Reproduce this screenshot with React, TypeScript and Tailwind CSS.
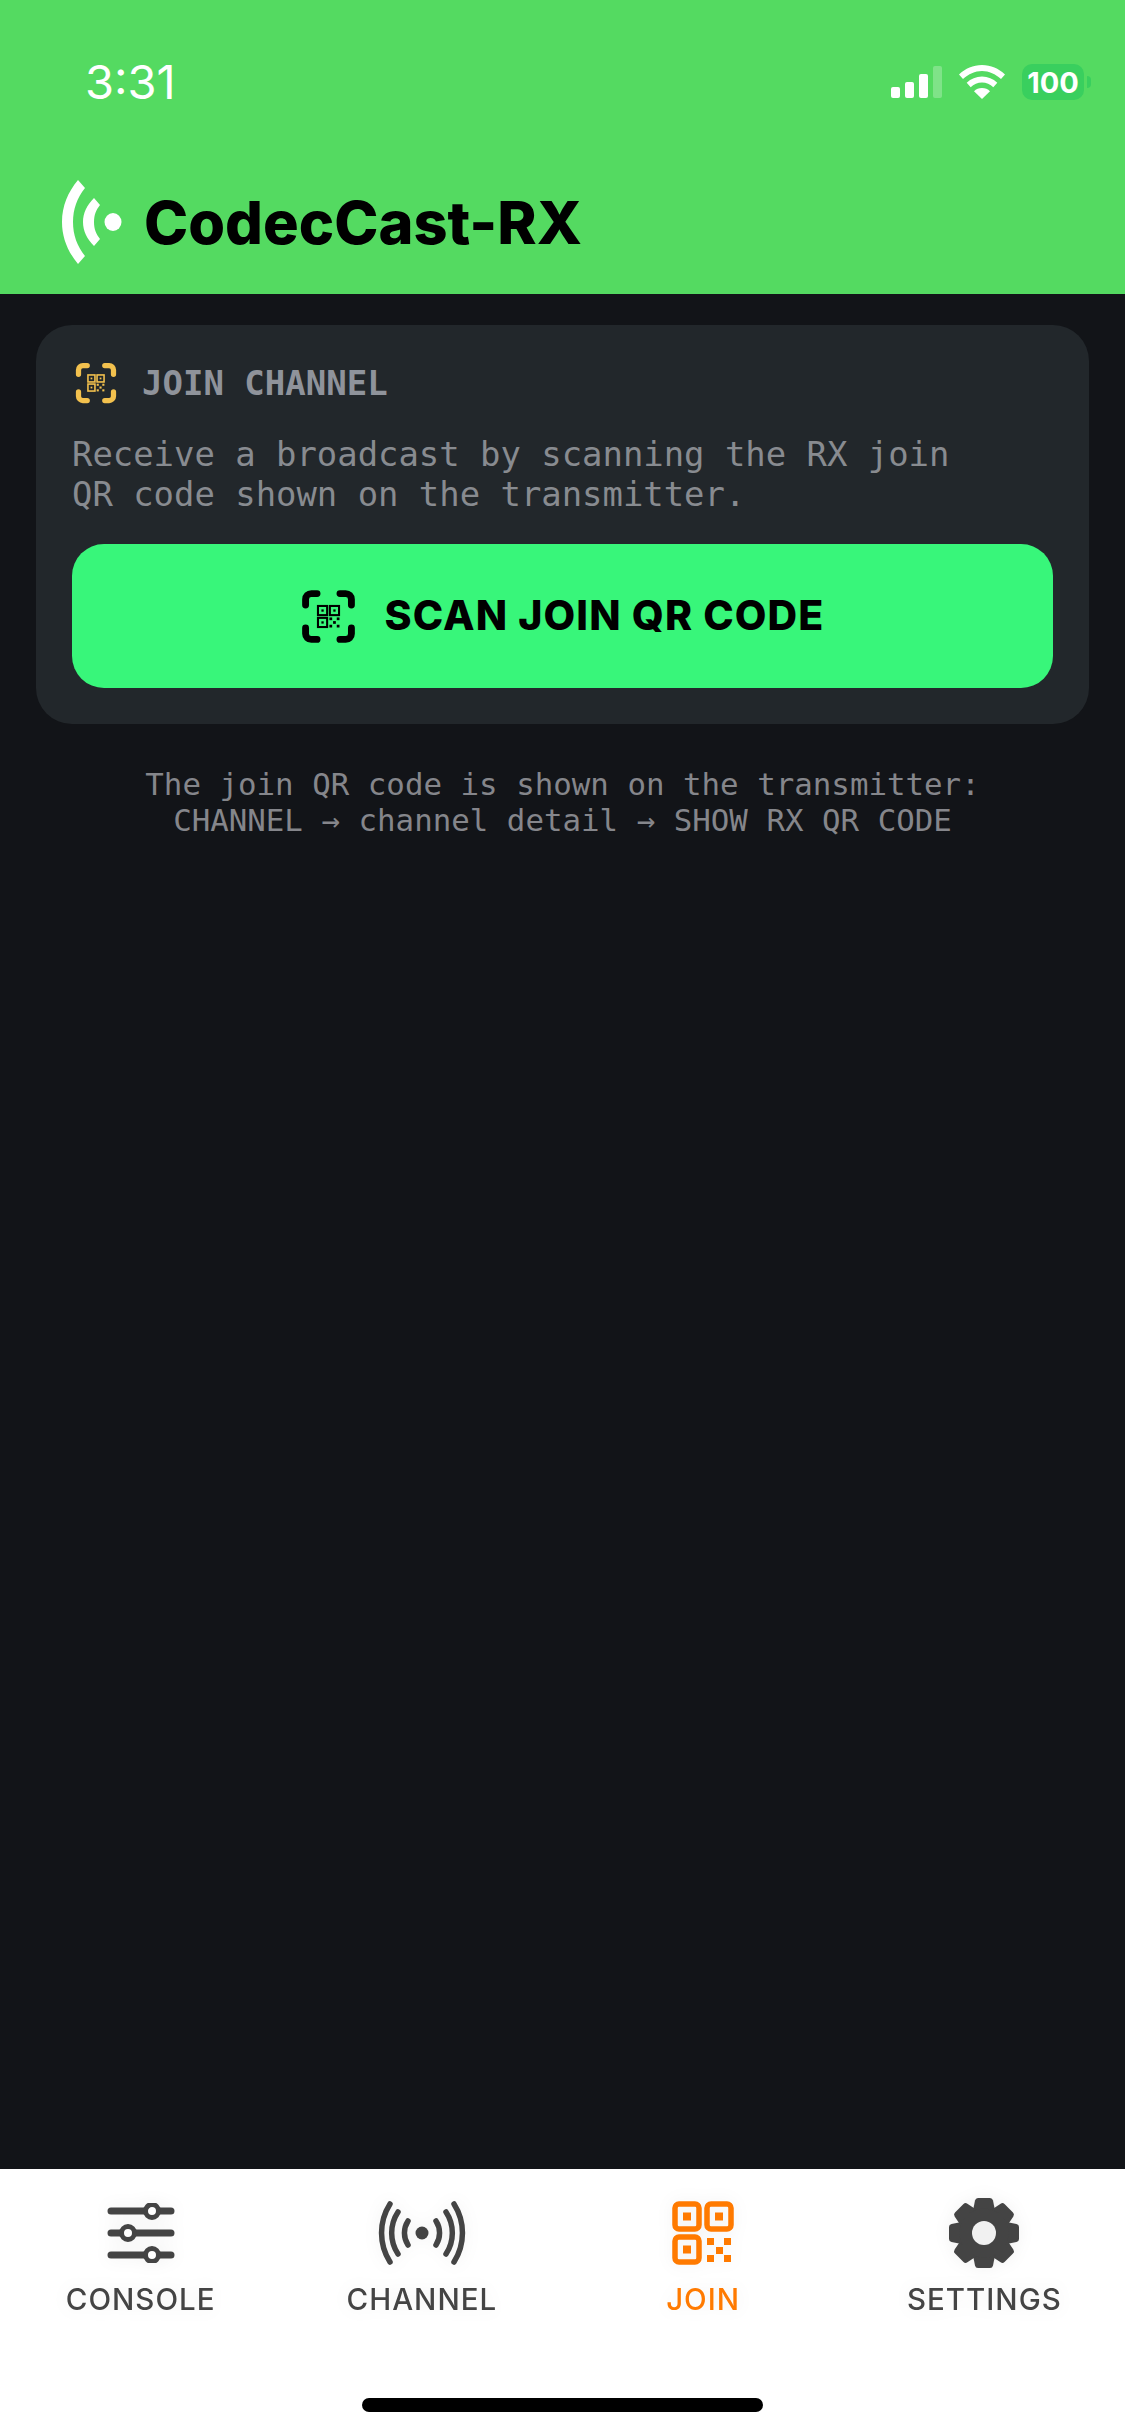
import type { ReactNode } from 'react';

const mono = 'font-["DejaVu_Sans_Mono","Liberation_Mono",monospace]';

function MiniQr() {
  return (
    <g>
      <rect x="7.4" y="7.4" width="4" height="4" fill="none" stroke="currentColor" strokeWidth="0.9" />
      <rect x="8.900" y="8.900" width="1" height="1" fill="currentColor" />
      <rect x="12.6" y="7.4" width="4" height="4" fill="none" stroke="currentColor" strokeWidth="0.9" />
      <rect x="14.100" y="8.900" width="1" height="1" fill="currentColor" />
      <rect x="7.4" y="12.6" width="4" height="4" fill="none" stroke="currentColor" strokeWidth="0.9" />
      <rect x="8.900" y="14.100" width="1" height="1" fill="currentColor" />
      <rect x="12.4" y="12.4" width="1.2" height="1.2" fill="currentColor" />
      <rect x="15.6" y="12.4" width="1.2" height="1.2" fill="currentColor" />
      <rect x="14" y="14" width="1.2" height="1.2" fill="currentColor" />
      <rect x="12.4" y="15.6" width="1.2" height="1.2" fill="currentColor" />
      <rect x="15.6" y="15.6" width="1.2" height="1.2" fill="currentColor" />
    </g>
  );
}

function ScanQrIcon({ className }: { className: string }) {
  return (
    <svg className={className} viewBox="0 0 24 24" fill="none">
      <path
        d="M2 7V4.500A2.500 2.500 0 0 1 4.500 2H7M17 2h2.500A2.500 2.500 0 0 1 22 4.500V7M22 17v2.500a2.500 2.500 0 0 1-2.500 2.500H17M7 22H4.500A2.500 2.500 0 0 1 2 19.500V17"
        stroke="currentColor"
        strokeWidth="3"
        strokeLinecap="round"
      />
      <MiniQr />
    </svg>
  );
}

function SlidersIcon() {
  return (
    <svg className="w-[68px] h-[60px]" viewBox="0 0 68 60" fill="none" stroke="currentColor" strokeWidth="7" strokeLinecap="round">
      <path d="M4 8h60M4 30h60M4 52h60" />
      <circle cx="45" cy="8" r="6.500" fill="#fff" strokeWidth="5" />
      <circle cx="21" cy="30" r="6.500" fill="#fff" strokeWidth="5" />
      <circle cx="45" cy="52" r="6.500" fill="#fff" strokeWidth="5" />
    </svg>
  );
}

function BroadcastIcon() {
  return (
    <svg className="w-[88px] h-[64px]" viewBox="0 0 88 64" fill="none" stroke="currentColor" strokeWidth="5.500" strokeLinecap="round">
      <circle cx="44" cy="32" r="6.500" fill="currentColor" stroke="none" />
      <path d="M30 20a22 22 0 0 0 0 24M58 20a22 22 0 0 1 0 24" />
      <path d="M20 11a38 38 0 0 0 0 42M68 11a38 38 0 0 1 0 42" />
      <path d="M12 3a54 54 0 0 0 0 58M76 3a54 54 0 0 1 0 58" />
    </svg>
  );
}

function QrIcon() {
  return (
    <svg className="w-[62px] h-[64px]" viewBox="0 0 62 64" fill="none">
      <rect x="3" y="3" width="24" height="25" rx="4" stroke="currentColor" strokeWidth="5.500" />
      <rect x="35" y="3" width="24" height="25" rx="4" stroke="currentColor" strokeWidth="5.500" />
      <rect x="3" y="36" width="24" height="25" rx="4" stroke="currentColor" strokeWidth="5.500" />
      <g fill="currentColor">
        <rect x="11" y="11.500" width="8" height="8" />
        <rect x="43" y="11.500" width="8" height="8" />
        <rect x="11" y="44.500" width="8" height="8" />
        <rect x="35" y="37" width="7" height="7" />
        <rect x="52" y="37" width="7" height="7" />
        <rect x="44" y="46" width="7" height="7" />
        <rect x="35" y="54" width="7" height="7" />
        <rect x="52" y="54" width="7" height="7" />
      </g>
    </svg>
  );
}

function GearIcon() {
  return (
    <svg className="w-[72px] h-[74px]" viewBox="0 0 72 72">
      <g fill="currentColor">
        {[0, 45, 90, 135, 180, 225, 270, 315].map((deg) => (
          <path key={deg} d="M30 1q-2.500 0-3 2.500L24.500 16h23L45 3.500q-.5-2.500-3-2.500z" transform={`rotate(${deg} 36 36)`} />
        ))}
        <circle cx="36" cy="36" r="24.500" />
      </g>
      <circle cx="36" cy="36" r="12" fill="#f1f1f1" />
    </svg>
  );
}

function NavTab({ icon, label, active }: { icon: ReactNode; label: string; active?: boolean }) {
  return (
    <div className={`flex flex-col items-center ${active ? 'text-[#ff7a00]' : 'text-[#444444]'}`}>
      <div className="h-[80px] flex items-center justify-center drop-shadow-[0_0_8px_rgba(0,0,0,0.06)]">{icon}</div>
      <span className="mt-[9px] text-[29.5px] leading-[34px] font-medium tracking-[1px] font-['Inter',sans-serif] drop-shadow-[0_0_8px_rgba(0,0,0,0.06)]">{label}</span>
    </div>
  );
}

export default function App() {
  return (
    <div className="w-[1125px] h-[2436px] flex flex-col bg-[#121418] overflow-hidden font-['Inter',sans-serif]">
      {/* Header */}
      <header className="h-[294px] bg-[#54da61] flex flex-col">
        <div className="h-[166px] flex items-start justify-between pt-[56px] pl-[85px] pr-[34px]">
          <span className="text-[47px] leading-[52px] text-white">3:31</span>
          <div className="flex items-center gap-[17px] pt-[8px]">
            <div className="flex items-end gap-[5px] h-[32px]">
              <div className="w-[9px] h-[11px] rounded-[2px] bg-white" />
              <div className="w-[9px] h-[16px] rounded-[2px] bg-white" />
              <div className="w-[9px] h-[24px] rounded-[2px] bg-white" />
              <div className="w-[9px] h-[32px] rounded-[2px] bg-white/25" />
            </div>
            <svg className="w-[46px] h-[34px]" viewBox="0 0 46 34" fill="#fff">
              <path d="M23 0C14 0 6.500 3.500 0 9.500l4 4.500C9.500 9 16 6 23 6s13.500 3 19 8l4-4.500C39.500 3.500 32 0 23 0z" />
              <path d="M23 11.500c-6 0-11 2.300-15.300 6.200l4 4.500c3-2.800 7-4.700 11.300-4.700s8.300 1.900 11.300 4.700l4-4.500C34 13.800 29 11.500 23 11.500z" />
              <path d="M23 23c-3.200 0-5.800 1.200-8 3.200L23 34l8-7.800c-2.200-2-4.800-3.200-8-3.200z" />
            </svg>
            <div className="flex items-center gap-[3px]">
              <div className="w-[62px] h-[36px] rounded-[10px] bg-[#39cf5e] flex items-center justify-center text-white text-[29px] leading-none font-bold">100</div>
              <div className="w-[4px] h-[12px] rounded-r-[4px] bg-[#39cf5e]" />
            </div>
          </div>
        </div>
        <div className="flex items-center pl-[62px] h-[94px] pt-[18px]">
          <svg className="w-[60px] h-[84px]" viewBox="0 0 60 84" fill="#fff">
            <ellipse cx="51" cy="42" rx="8.500" ry="9" />
            <path d="M16 0l7 8C15 18 11 29 11 42s4 24 12 34l-7 8C6 72 0 58 0 42S6 12 16 0z" />
            <path d="M32 18l6 7c-4 5-6 10-6 17s2 12 6 17l-6 7c-7-7-11-15-11-24s4-17 11-24z" />
          </svg>
          <h1 className="ml-[22px] text-[59.5px] leading-[72px] font-extrabold text-black">CodecCast-RX</h1>
        </div>
      </header>

      {/* Content */}
      <main className="flex-1 px-[36px] pt-[31px]">
        <section className="bg-[#22272b] rounded-[36px] px-[36px] pt-[37px] pb-[36px]">
          <div className="flex items-center gap-[25px] pl-[3px]">
            <ScanQrIcon className="w-[42px] h-[42px] text-[#f3c14e]" />
            <span className={`${mono} text-[34px] leading-[42px] font-bold text-[#8f939b]`}>JOIN CHANNEL</span>
          </div>
          <p className={`${mono} mt-[31px] text-[33.9px] leading-[40px] text-[#888b90]`}>
            Receive a broadcast by scanning the RX join
            <br />
            QR code shown on the transmitter.
          </p>
          <button className="mt-[29px] w-full h-[144px] rounded-[32px] bg-[#38f67a] flex items-center justify-center gap-[29px] text-black">
            <ScanQrIcon className="w-[55px] h-[55px]" />
            <span className="text-[41px] font-extrabold tracking-[1.1px]">SCAN JOIN QR CODE</span>
          </button>
        </section>
        <p className={`${mono} mt-[42px] text-center text-[30.8px] leading-[36px] text-[#85868b]`}>
          The join QR code is shown on the transmitter:
          <br />
          CHANNEL → channel detail → SHOW RX QR CODE
        </p>
      </main>

      {/* Tab bar */}
      <nav className="h-[267px] bg-white flex flex-col">
        <div className="grid grid-cols-4 pt-[24px]">
          <NavTab icon={<SlidersIcon />} label="CONSOLE" />
          <NavTab icon={<BroadcastIcon />} label="CHANNEL" />
          <NavTab icon={<QrIcon />} label="JOIN" active />
          <NavTab icon={<GearIcon />} label="SETTINGS" />
        </div>
        <div className="mt-auto mb-[24px] mx-auto w-[401px] h-[14px] rounded-full bg-black" />
      </nav>
    </div>
  );
}
